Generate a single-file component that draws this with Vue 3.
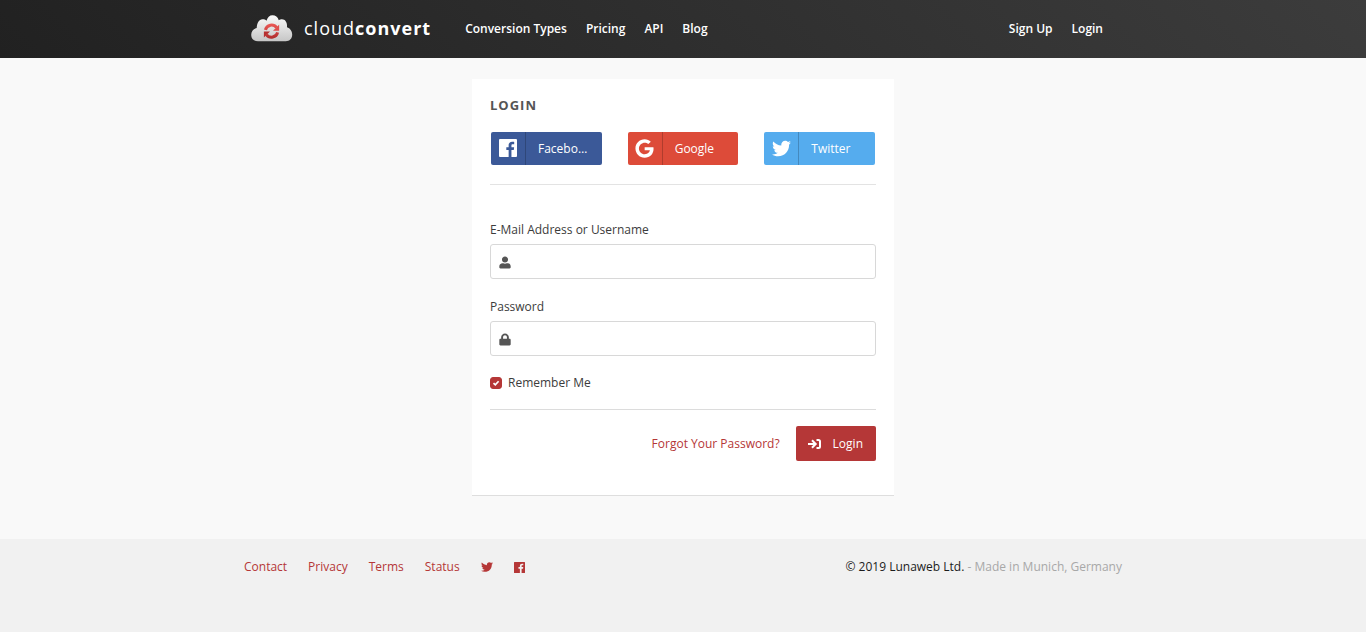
<script setup>
import { ref } from 'vue'

const user = ref('')
const password = ref('')
const remember = ref(true)

const mainLinks = ['Conversion Types', 'Pricing', 'API', 'Blog']
const accountLinks = ['Sign Up', 'Login']
const footerLinks = ['Contact', 'Privacy', 'Terms', 'Status']

const twitterPath =
  'M459.37 151.716c.325 4.548.325 9.097.325 13.645 0 138.72-105.583 298.558-298.558 298.558-59.452 0-114.68-17.219-161.137-47.106 8.447.974 16.568 1.299 25.34 1.299 49.055 0 94.213-16.568 130.274-44.832-46.132-.975-84.792-31.188-98.112-72.772 6.498.974 12.995 1.624 19.818 1.624 9.421 0 18.843-1.3 27.614-3.573-48.081-9.747-84.143-51.98-84.143-102.985v-1.299c13.969 7.797 30.214 12.67 47.431 13.319-28.264-18.843-46.781-51.005-46.781-87.391 0-19.492 5.197-37.36 14.294-52.954 51.655 63.675 129.3 105.258 216.365 109.807-1.624-7.797-2.599-15.918-2.599-24.04 0-57.828 46.782-104.934 104.934-104.934 30.213 0 57.502 12.67 76.67 33.137 23.715-4.548 46.456-13.32 66.599-25.34-7.798 24.366-24.366 44.833-46.132 57.827 21.117-2.273 41.584-8.122 60.426-16.243-14.292 20.791-32.161 39.308-52.628 54.253z'
const facebookPath =
  'M28 0H484a28 28 0 0 1 28 28V484a28 28 0 0 1-28 28H354V314h66l10-77h-76v-49c0-22 6-37 38-37h40V82c-7-1-31-3-59-3-59 0-99 36-99 102v56h-66v77h66v198H28a28 28 0 0 1-28-28V28A28 28 0 0 1 28 0z'
const googlePath =
  'M500 261.8C500 403.3 403.1 504 260 504 122.8 504 12 393.2 12 256S122.8 8 260 8c66.800 0 123 24.500 166.300 64.900l-67.500 64.900C270.500 52.600 106.300 116.600 106.300 256c0 86.500 69.100 156.600 153.700 156.600 98.200 0 135-70.400 140.800-106.900H260v-85.300h236.100c2.300 12.700 3.900 24.900 3.900 41.400z'

const socials = [
  { id: 'facebook', label: 'Facebook', path: facebookPath },
  { id: 'google', label: 'Google', path: googlePath },
  { id: 'twitter', label: 'Twitter', path: twitterPath },
]
</script>

<template>
  <div class="page">
    <header class="header">
      <div class="container header-row">
        <a class="brand" href="#">
          <svg class="cloud" viewBox="0 0 42 27" aria-hidden="true">
            <defs>
              <linearGradient id="cloud-fill" x1="0" y1="0" x2="0" y2="1">
                <stop offset="0" stop-color="#fafafa" />
                <stop offset="1" stop-color="#c6c6c6" />
              </linearGradient>
              <linearGradient id="arrow-fill" gradientUnits="userSpaceOnUse" x1="0" y1="8" x2="0" y2="25">
                <stop offset="0" stop-color="#ee5b58" />
                <stop offset="1" stop-color="#aa2828" />
              </linearGradient>
            </defs>
            <path
              fill="url(#cloud-fill)"
              d="M7 26.200C3 26.200.2 23.800.2 20c0-3.600 2-6.400 5.500-7C6 8 8 4.300 11.500 4.300c1.700 0 3 .4 4 1.500C16.500 2.200 18.500.2 21.500.2c3 0 5.300 1.800 6.300 5 1-.8 2-1 3.200-1 3.400 0 5.400 3.300 5 8 3 .9 5.200 3.700 5.200 7.300 0 4-2.500 6.700-6.500 6.700z"
            />
            <g fill="none" stroke="url(#arrow-fill)" stroke-width="3">
              <path d="M14.400 14.900A6.300 6.300 0 0 1 25.600 12.600" />
              <path d="M26.600 17.300A6.300 6.300 0 0 1 15.400 19.600" />
            </g>
            <path fill="#df4d4b" d="M28.100 9.700v6.100H22z" />
            <path fill="#b73030" d="M12.900 22.500v-6.100H19z" />
          </svg>
          <span class="brand-name">cloud<b>convert</b></span>
        </a>
        <nav class="nav" aria-label="Main">
          <a v-for="link in mainLinks" :key="link" href="#">{{ link }}</a>
        </nav>
        <nav class="nav account" aria-label="Account">
          <a v-for="link in accountLinks" :key="link" href="#">{{ link }}</a>
        </nav>
      </div>
    </header>

    <main class="main">
      <section class="card">
        <h1 class="title">Login</h1>
        <div class="socials">
          <button v-for="s in socials" :key="s.id" type="button" class="social" :class="s.id">
            <span class="social-icon">
              <svg viewBox="0 0 512 512" aria-hidden="true"><path fill="currentColor" :d="s.path" /></svg>
            </span>
            <span class="social-label">{{ s.label }}</span>
          </button>
        </div>

        <form class="form" @submit.prevent>
          <div class="field">
            <label for="user">E-Mail Address or Username</label>
            <div class="control">
              <svg class="control-icon" viewBox="0 0 448 512" aria-hidden="true">
                <path fill="currentColor" d="M224 256c70.700 0 120-53 120-120S294.700 16 224 16 104 69 104 136s49.300 120 120 120zm89.600 32h-16.700c-22.200 10.200-46.900 16-72.900 16s-50.600-5.800-72.900-16h-16.700C50 288 0 340 0 410v36c0 26.500 18 42 44 42h360c26 0 44-15.500 44-42v-36c0-70-50-122-134.400-122z" />
              </svg>
              <input id="user" v-model="user" type="text" />
            </div>
          </div>
          <div class="field">
            <label for="password">Password</label>
            <div class="control">
              <svg class="control-icon" viewBox="0 0 448 512" aria-hidden="true">
                <path fill="currentColor" d="M404 224h-28v-56C376 84 308 16 224 16S72 84 72 168v56H44c-24 0-44 20-44 44v176c0 24 20 44 44 44h360c24 0 44-20 44-44V268c0-24-20-44-44-44zm-104 0H148v-56c0-42 34-76 76-76s76 34 76 76z" />
              </svg>
              <input id="password" v-model="password" type="password" />
            </div>
          </div>
          <label class="remember" for="remember">
            <span class="check">
              <input id="remember" v-model="remember" type="checkbox" />
              <svg v-if="remember" viewBox="0 0 12 12" aria-hidden="true">
                <path d="M3.500 6.200l1.800 1.700 3.300-3.600" fill="none" stroke="#fff" stroke-width="1.700" />
              </svg>
            </span>
            Remember Me
          </label>
          <div class="actions">
            <a class="forgot" href="#">Forgot Your Password?</a>
            <button class="submit" type="submit">
              <svg viewBox="0 0 13 12" aria-hidden="true">
                <path d="M0 6h7M4 2.300L7.700 6 4 9.700M8.500 2h2A1.500 1.500 0 0 1 12 3.500v5a1.500 1.500 0 0 1-1.500 1.500h-2" fill="none" stroke="currentColor" stroke-width="2" />
              </svg>
              Login
            </button>
          </div>
        </form>
      </section>
    </main>

    <footer class="footer">
      <div class="container footer-row">
        <nav class="footer-nav" aria-label="Footer">
          <a v-for="link in footerLinks" :key="link" href="#">{{ link }}</a>
          <a class="icon-link" href="#" aria-label="Twitter">
            <svg viewBox="0 0 512 512" aria-hidden="true"><path fill="currentColor" :d="twitterPath" /></svg>
          </a>
          <a class="icon-link" href="#" aria-label="Facebook">
            <svg class="small" viewBox="0 0 512 512" aria-hidden="true"><path fill="currentColor" :d="facebookPath" /></svg>
          </a>
        </nav>
        <p class="copyright"><span>© 2019 Lunaweb Ltd.</span> - Made in Munich, Germany</p>
      </div>
    </footer>
  </div>
</template>

<style>
body {
  background: #f9f9f9;
}
</style>

<style scoped>
.page,
.page * {
  box-sizing: border-box;
}
.page {
  display: flex;
  flex-direction: column;
  min-height: 100vh;
  font-family: "Open Sans", "Noto Sans", sans-serif;
  font-size: 12px;
  line-height: 18px;
  color: #3c3c3c;
}
a {
  color: #b53737;
  text-decoration: none;
}
button,
input {
  margin: 0;
  font: inherit;
}
svg {
  display: block;
}
.container {
  width: 100%;
  max-width: 878px;
  margin: 0 auto;
}
.header {
  background: linear-gradient(45deg, #212121, #3c3c3c);
}
.header-row {
  display: flex;
  align-items: center;
  height: 58px;
  padding: 0 19px 0 7px;
}
.brand {
  display: flex;
  align-items: center;
  gap: 11px;
  margin-right: 34px;
  padding-bottom: 1px;
  color: #fff;
}
.cloud {
  width: 42px;
  height: 27px;
}
.brand-name {
  font-size: 18px;
  line-height: 25px;
  letter-spacing: 1px;
}
.nav {
  display: flex;
  gap: 19px;
}
.nav a {
  color: #fff;
  font-weight: 600;
}
.account {
  margin-left: auto;
}
.main {
  flex: 1;
  padding: 21px 0 43px;
}
.card {
  width: 100%;
  max-width: 422px;
  margin: 0 auto;
  padding: 17px 18px 34px;
  background: #fff;
  border-bottom: 1px solid #dedede;
}
.title {
  margin: 0 0 18px;
  font-size: 13px;
  line-height: 18px;
  letter-spacing: 1px;
  text-transform: uppercase;
  color: #555;
}
.socials {
  display: grid;
  grid-template-columns: repeat(3, 1fr);
  gap: 26px;
  padding: 0 1px 19px;
  border-bottom: 1px solid #e3e3e3;
}
.social {
  display: flex;
  align-items: stretch;
  min-width: 0;
  height: 33px;
  padding: 0;
  border: 0;
  border-radius: 2px;
  color: #fff;
}
.facebook {
  background: #3b5998;
}
.google {
  background: #dd4b39;
}
.twitter {
  background: #55acee;
}
.social-icon {
  display: flex;
  flex: none;
  align-items: center;
  justify-content: center;
  width: 35px;
  padding-bottom: 1px;
  border-right: 1px solid rgba(0, 0, 0, 0.2);
}
.social-icon svg {
  width: 19px;
  height: 19px;
}
.facebook svg {
  width: 18px;
  height: 18px;
}
.social-label {
  flex: 1;
  min-width: 0;
  padding: 0 12px;
  overflow: hidden;
  line-height: 33px;
  text-align: left;
  text-overflow: ellipsis;
  white-space: nowrap;
}
.form {
  padding-top: 36px;
}
.field + .field {
  margin-top: 19px;
}
.field label {
  display: block;
  margin-bottom: 5px;
}
.control {
  position: relative;
}
.control input {
  display: block;
  width: 100%;
  height: 35px;
  padding: 0 12px 0 32px;
  border: 1px solid #d8d8d8;
  border-radius: 3px;
  background: #fff;
  color: #3c3c3c;
}
.control-icon {
  position: absolute;
  top: 12px;
  left: 9px;
  width: 12px;
  height: 13px;
  color: #555;
}
.remember {
  display: flex;
  align-items: center;
  gap: 6px;
  margin-top: 18px;
  padding-bottom: 17px;
  border-bottom: 1px solid #dcdcdc;
}
.check {
  position: relative;
  width: 12px;
  height: 12px;
}
.check input {
  display: block;
  width: 12px;
  height: 12px;
  appearance: none;
  border: 1px solid #b53737;
  border-radius: 3px;
}
.check input:checked {
  background: #b53737;
}
.check svg {
  position: absolute;
  inset: 0;
  pointer-events: none;
}
.actions {
  display: flex;
  align-items: center;
  justify-content: flex-end;
  gap: 16px;
  padding-top: 16px;
}
.submit {
  display: flex;
  align-items: center;
  gap: 12px;
  height: 35px;
  padding: 0 13px 0 12px;
  border: 0;
  border-radius: 2px;
  background: #b53737;
  color: #fff;
}
.submit svg {
  width: 13px;
  height: 12px;
}
.footer {
  min-height: 93px;
  padding-top: 19px;
  background: #f1f1f1;
}
.footer-row {
  display: flex;
  justify-content: space-between;
}
.footer-nav {
  display: flex;
  align-items: center;
  gap: 21px;
}
.icon-link svg {
  width: 12px;
  height: 12px;
}
.icon-link .small {
  width: 11px;
  height: 11px;
}
.copyright {
  margin: 0;
  color: #a8a8a8;
}
.copyright span {
  color: #1c1c1c;
}
</style>
